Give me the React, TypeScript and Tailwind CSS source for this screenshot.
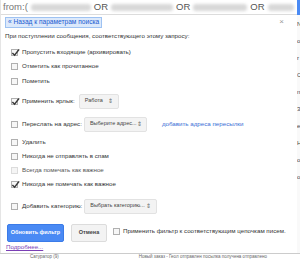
import type { ReactNode } from 'react'

function Box({ checked, disabled }: { checked?: boolean; disabled?: boolean }) {
  return (
    <span className={`relative inline-block w-[7px] h-[7px] shrink-0 border ${disabled ? 'border-[#dcdcdc] bg-[#f5f5f5]' : 'border-[#b0b0b0] bg-[#f7f7f7]'}`}>
      {checked && (
        <svg viewBox="0 0 10 10" className="absolute left-[-1px] top-[-2px] w-[9px] h-[9px]">
          <path d="M1.5 5.5 L4 8 L9 1.5" fill="none" stroke="#3a3a3a" strokeWidth="1.7" />
        </svg>
      )}
    </span>
  )
}

function Select({ label, w }: { label: string; w: string }) {
  return (
    <span className={`inline-flex items-center justify-between whitespace-nowrap ${w} h-[15px] px-[5px] rounded-[2px] border border-[#e2e2e2] bg-[#f3f3f3] text-[5.5px] text-[#444]`}>
      <span>{label}</span>
      <span className="text-[6px] leading-none text-[#666]">⇕</span>
    </span>
  )
}

function Row({ h, checked, disabled, children, extra }: { h: string; checked?: boolean; disabled?: boolean; children: ReactNode; extra?: ReactNode }) {
  return (
    <div className={`flex items-center whitespace-nowrap ${h} pl-[10px]`}>
      <Box checked={checked} disabled={disabled} />
      <span className={`ml-[4px] ${disabled ? 'text-[#555]' : 'text-[#333]'}`}>{children}</span>
      {extra}
    </div>
  )
}

function Blur({ w }: { w: string }) {
  return <span className={`inline-block shrink-0 ${w} h-[7px] rounded-[3px] bg-[#d8d8d8] blur-[1.5px]`} />
}

export default function App() {
  return (
    <div className="w-[300px] h-[259px] overflow-hidden bg-[#f4f4f4] text-[6.2px] leading-none" style={{ fontFamily: '"Liberation Sans", Arial, sans-serif' }}>
      <div className="flex h-[253px]">
        <div className="w-[297px] shrink-0 bg-white border-l border-[#e5e5e5] flex flex-col">
          <div className="flex items-center whitespace-nowrap overflow-hidden h-[15px] border-b border-[#dcdcdc] pl-[2px] text-[9.5px] text-[#777] gap-[3px]">
            <span className="shrink-0">from:(</span>
            <Blur w="w-[60px]" />
            <span className="shrink-0 text-[#555]">OR</span>
            <Blur w="w-[62px]" />
            <span className="shrink-0 text-[#555]">OR</span>
            <Blur w="w-[54px]" />
            <span className="shrink-0 text-[#555]">OR</span>
            <Blur w="w-[26px]" />
          </div>
          <div className="relative flex-1">
            <span className="absolute right-[13px] top-[3px] text-[8px] text-[#999]">×</span>
            <div className="pl-[4px] pt-[2px]">
              <span className="inline-flex items-center whitespace-nowrap h-[11px] px-[2px] border border-[#9ec2f2] bg-[#dce9fb] text-[#1a5ad0] text-[6.6px]">« Назад к параметрам поиска</span>
            </div>
            <div className="pl-[4px] mt-[3px] h-[10px] flex items-center whitespace-nowrap text-[#333]">При поступлении сообщения, соответствующего этому запросу:</div>
            <div className="mt-[4px]">
              <Row h="h-[14px]" checked>Пропустить входящие (архивировать)</Row>
              <Row h="h-[14px]">Отметить как прочитанное</Row>
              <Row h="h-[16px]">Пометить</Row>
              <Row h="h-[24px]" checked extra={<span className="ml-[4px]"><Select label="Работа" w="w-[40px]" /></span>}>Применить ярлык:</Row>
              <Row h="h-[22px]" extra={
                <>
                  <span className="ml-[2px]"><Select label="Выберите адрес..." w="w-[63px]" /></span>
                  <span className="ml-[15px] text-[#3b6fd6]">добавить адреса пересылки</span>
                </>
              }>Переслать на адрес:</Row>
              <Row h="h-[14px]">Удалить</Row>
              <Row h="h-[14px]">Никогда не отправлять в спам</Row>
              <Row h="h-[14px]" disabled>Всегда помечать как важное</Row>
              <Row h="h-[15px]" checked>Никогда не помечать как важное</Row>
              <Row h="h-[28px]" extra={<span className="ml-[2px]"><Select label="Выбрать категорию..." w="w-[73px]" /></span>}>Добавить категорию:</Row>
            </div>
            <div className="flex items-center whitespace-nowrap mt-[4px] pl-[6px] h-[18px]">
              <span className="flex items-center justify-center shrink-0 w-[57px] h-[18px] rounded-[2px] bg-[#4a8af4] border border-[#3b7be8] text-white font-bold text-[5.5px]">Обновить фильтр</span>
              <span className="flex items-center justify-center shrink-0 ml-[7px] w-[36px] h-[18px] rounded-[2px] bg-[#f3f3f3] border border-[#dcdcdc] text-[#444] font-bold text-[5.5px]">Отмена</span>
              <span className="flex items-center ml-[6px] self-start mt-[4px]">
                <Box />
                <span className="ml-[3px] text-[#333]">Применить фильтр к соответствующим цепочкам писем.</span>
              </span>
            </div>
            <div className="pl-[5px] h-[10px] flex items-center">
              <span className="text-[#7b3fb5] underline">Подробнее...</span>
            </div>
          </div>
        </div>
        <div className="flex-1 flex flex-col">
          <div className="h-[15px] bg-[#4a8af4]" />
          <div className="flex-1 flex flex-col gap-[11px] pt-[6px] text-[6px] text-[#444] bg-[#f9f9f9] overflow-hidden">
            <span>N</span><span>o</span><span>r</span><span>C</span><span>n</span><span>3</span><span>e</span><span>H</span><span>o</span><span>o</span>
          </div>
        </div>
      </div>
      <div className="h-[6px] border-t border-[#ccc] bg-white flex items-start whitespace-nowrap pl-[30px] text-[4.5px] leading-[5px] text-[#666] overflow-hidden">
        <span>Сатуратор (9)</span>
        <span className="ml-[80px]">Новый заказ - Геол отправлен посылка получена отправлено</span>
      </div>
    </div>
  )
}
